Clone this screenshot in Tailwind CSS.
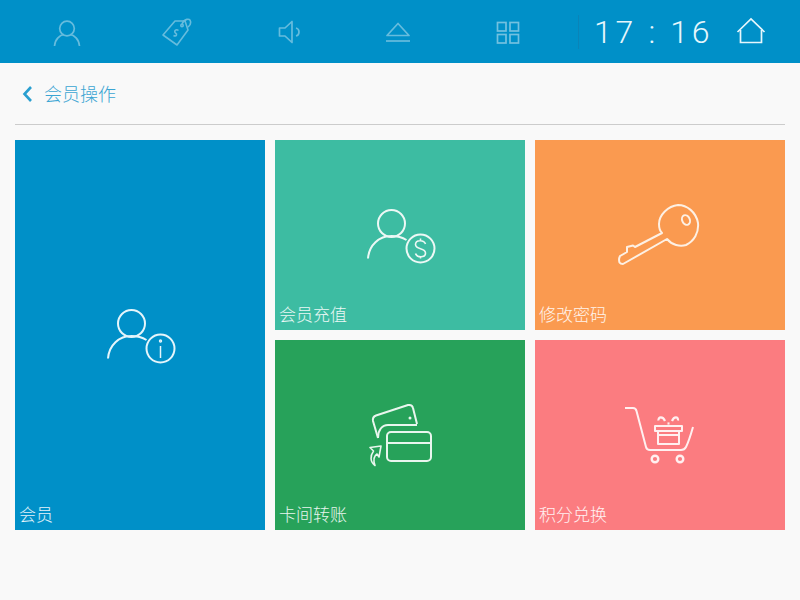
<!DOCTYPE html>
<html lang="zh"><head><meta charset="utf-8">
<script src="https://cdn.jsdelivr.net/npm/@tailwindcss/browser@4"></script>
</head>
<body class="w-[800px] h-[600px] overflow-hidden bg-[#f9f9f9] font-['Noto_Sans_CJK_SC',sans-serif]">
<header class="h-[63px] bg-[#0090c8] relative flex items-center">
  <div class="flex w-[578px] items-center h-full">
    <svg class="absolute left-[52px] top-[18px]" width="30" height="30" viewBox="0 0 30 30" fill="none" stroke="#66bcdd" stroke-width="1.7"><circle cx="15" cy="10.5" r="7.3"/><path d="M2.500 28C3 21 8 17 12 16.500M27.500 28C27 21 22 17 18 16.500"/></svg>
    <svg class="absolute left-[160px] top-[16px]" width="32" height="32" viewBox="0 0 32 32" fill="none" stroke="#66bcdd" stroke-width="1.600"><path d="M3 19L15 5H25L28 14L17 29z" stroke-linejoin="round"/><circle cx="22" cy="9.500" r="1.200"/><path d="M22 8C24 3 30 1.500 30.500 5.500C31 8 29.500 10 28 11"/><path d="M18.500 14.500c-2.500-2-5 1-3 2.500c2 1.200 1 4-2 2.500"/></svg>
    <svg class="absolute left-[277px] top-[19px]" width="26" height="26" viewBox="0 0 26 26" fill="none" stroke="#66bcdd" stroke-width="1.700"><path d="M2.500 9H8L15 2.500V23.500L8 17H2.500z" stroke-linejoin="round"/><path d="M19 9C23 10 23 16 19 17"/></svg>
    <svg class="absolute left-[385px] top-[21px]" width="26" height="22" viewBox="0 0 26 22" fill="none" stroke="#66bcdd" stroke-width="1.700"><path d="M2 14.500L13 2.500L24 14.500z" stroke-linejoin="round"/><path d="M1 20h24" /></svg>
    <svg class="absolute left-[496px] top-[21px]" width="25" height="24" viewBox="0 0 25 24" fill="none" stroke="#72c1e0" stroke-width="1.700"><rect x="1.500" y="1.500" width="8.500" height="8.500"/><rect x="14" y="1.500" width="8.500" height="8.500"/><rect x="1.500" y="13.500" width="8.500" height="8.500"/><rect x="14" y="13.500" width="8.500" height="8.500"/></svg>
  </div>
  <div class="absolute left-[578px] top-[15px] w-px h-[34px] bg-[#0a84b8]"></div>
  <span class="absolute left-[594px] top-[12px] text-[32px] leading-[40px] font-light tracking-[3.7px] text-[#e6f6fc] font-['Roboto',sans-serif] whitespace-pre">17 : 16</span>
  <svg class="absolute left-[736px] top-[17px]" width="30" height="28" viewBox="0 0 30 28" fill="none" stroke="#e6f6fc" stroke-width="1.700"><path d="M1.500 15L15 2L28.500 15"/><path d="M4.500 13V25.500H25.500V13"/></svg>
</header>

<main class="px-[15px]">
  <div class="h-[62px] border-b border-[#cccccc] flex items-center gap-[11px] pl-[7px]">
    <svg width="11" height="18" viewBox="0 0 11 18" fill="none" stroke="#2a9fd0" stroke-width="2.600"><path d="M9 2L2.500 9L9 16"/></svg>
    <span class="text-[18px] leading-[24px] mb-[2px] text-[#3ba5d3] font-light">会员操作</span>
  </div>

  <div class="mt-[15px] grid grid-cols-[250px_250px_250px] grid-rows-[190px_190px] gap-[10px] text-white/90 text-[17px] leading-[20px] font-light">
    <a class="row-span-2 bg-[#0090c8] flex flex-col justify-end relative">
      <svg class="absolute left-[92px] top-[168px]" width="72" height="56" viewBox="0 0 72 56" fill="none" stroke="#e5f5fb" stroke-width="2"><circle cx="24.500" cy="15.500" r="13.500"/><path d="M1 50.500C2 37 12 28 24.500 28C30 28 34 28.500 39.500 32"/><circle cx="53.500" cy="40.500" r="14"/><path d="M53.500 38V50" stroke-width="1.500"/><circle cx="53.500" cy="33" r="0.700"/></svg>
      <span class="pl-[4px] pb-[6px]">会员</span>
    </a>
    <a class="bg-[#3dbca2] flex flex-col justify-end relative">
      <svg class="absolute left-[92px] top-[68px]" width="72" height="56" viewBox="0 0 72 56" fill="none" stroke="#ecf8f5" stroke-width="2"><circle cx="24.500" cy="15.500" r="13.500"/><path d="M1 50.500C2 37 12 28 24.500 28C30 28 34 28.500 39.500 32"/><circle cx="53.500" cy="40.500" r="14"/><path d="M58.500 36C57 31.500 48.500 31.500 48.500 36.500C48.500 42 58.500 39.500 58.500 45C58.500 50 50 50 48.500 45.500M53.500 30.500V33M53.500 48V50.500" stroke-width="1.600"/></svg>
      <span class="pl-[4px] pb-[6px]">会员充值</span>
    </a>
    <a class="bg-[#fa9a50] flex flex-col justify-end relative">
      <svg class="absolute left-[83px] top-[63px]" width="84" height="64" viewBox="0 0 84 64" fill="none" stroke="#fdf0e4" stroke-width="2" stroke-linejoin="round"><path d="M44 30L17 44L15 42.500L9 44V49L2 53C1 55 1 58 1.500 59.500C2.500 61 4 61 5 61L49 36C54 42 62 44 68 42C76 38 81 30 80 20C78 9 69 2 60 2C50 3 41 12 41 21C41 25 42 28 44 30Z"/><ellipse cx="68" cy="17" rx="3.800" ry="5" transform="rotate(-25 68 17)"/></svg>
      <span class="pl-[4px] pb-[6px]">修改密码</span>
    </a>
    <a class="bg-[#27a25a] flex flex-col justify-end relative">
      <svg class="absolute left-[92px] top-[60px]" width="70" height="70" viewBox="0 0 70 70" fill="none" stroke="#e9f6ee" stroke-width="2" stroke-linejoin="round"><path d="M11 38L6 21C5.500 18.500 6.500 16.500 9 15.500L41 5C44 4.500 45.500 5.500 46 8L50 24"/><path d="M11 38C11 30 15 25 21 25H50"/><circle cx="43" cy="18" r="1.500" fill="#e9f6ee" stroke="none"/><rect x="20" y="32" width="44" height="29" rx="4"/><path d="M20 43H64"/><path d="M14 46L3 47.500L6.500 51C3 56 3 62 8 65.500C6 60 7 56 10 54L12 57Z" stroke-width="1.600"/></svg>
      <span class="pl-[4px] pb-[6px]">卡间转账</span>
    </a>
    <a class="bg-[#fb7c80] flex flex-col justify-end relative">
      <svg class="absolute left-[90px] top-[65px]" width="72" height="60" viewBox="0 0 72 60" fill="none" stroke="#fff0f0" stroke-width="2" stroke-linejoin="round"><path d="M0 3H8C10 3 11 4 11.500 6L21 42C21.500 44 23 45 25 45H56C58 45 60 44 61 42C64 36 66 29 68 22"/><circle cx="30" cy="54" r="3.300" stroke-width="2.400"/><circle cx="55" cy="54" r="3.300" stroke-width="2.400"/><path d="M30 21H57V26H30z"/><path d="M33 26V39H54V26"/><path d="M33 30H54"/><path d="M40 16C38 11 33 11.500 33.500 15.500M47 16C49 11 53.500 11.500 53 15.500" stroke-width="2.200"/><path d="M42.500 18.500H44.500" stroke-width="2.200"/></svg>
      <span class="pl-[4px] pb-[6px]">积分兑换</span>
    </a>
  </div>
</main>
</body></html>
